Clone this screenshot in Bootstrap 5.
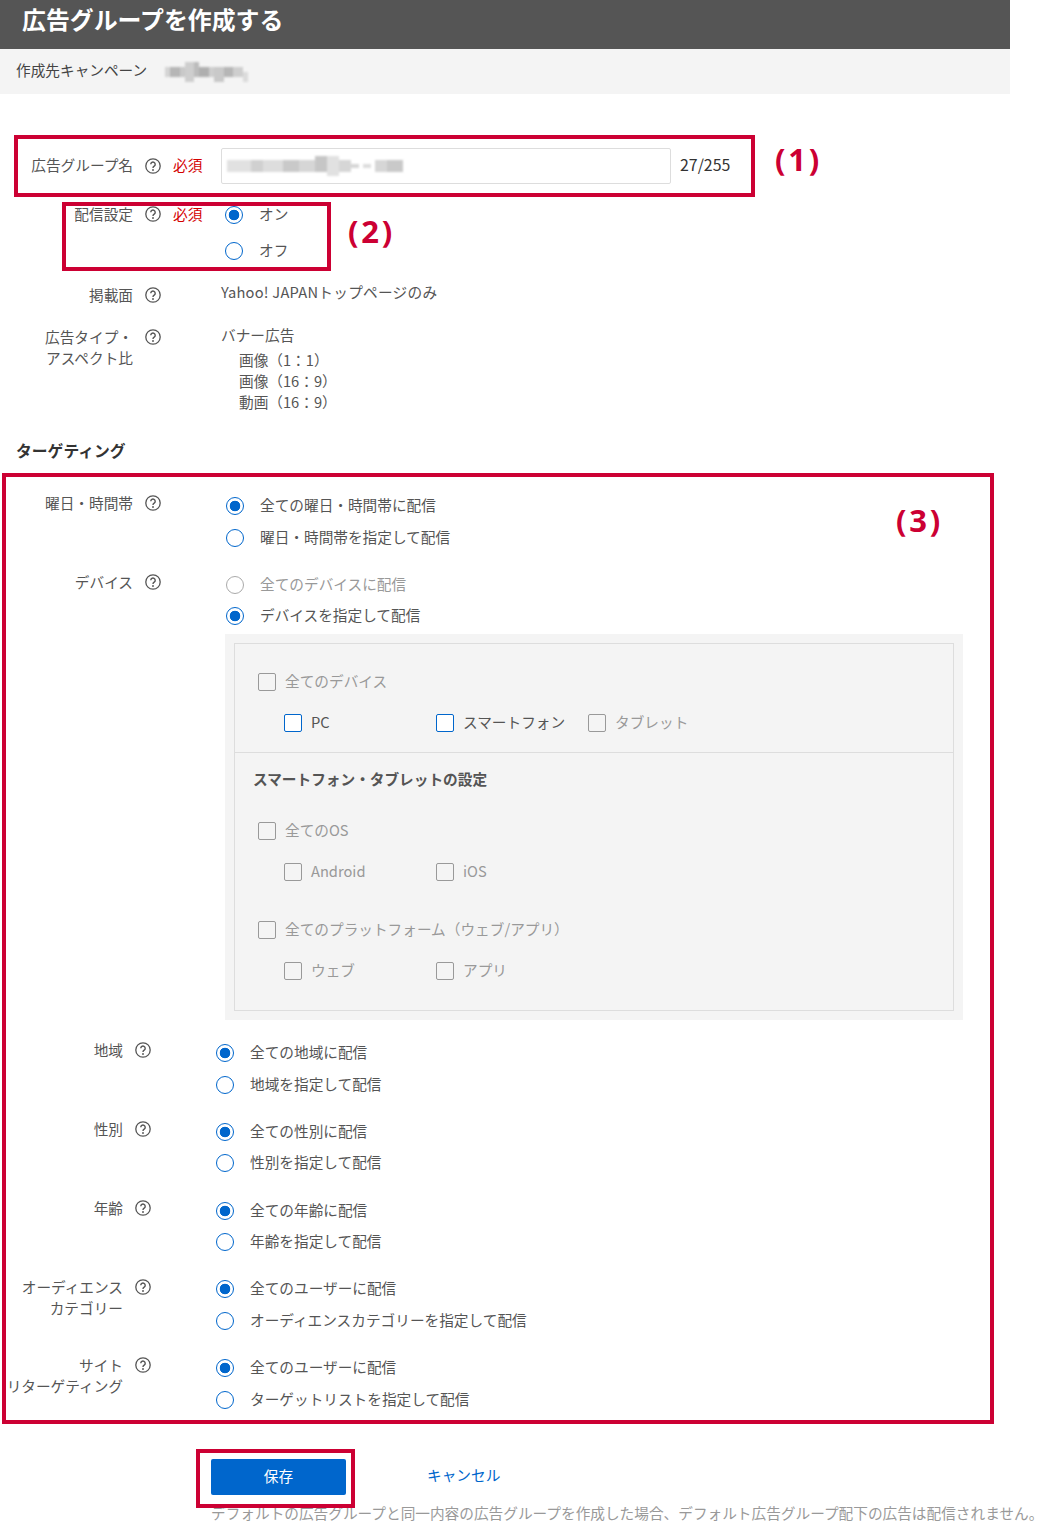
<!DOCTYPE html>
<html lang="ja">
<head>
<meta charset="utf-8">
<title>広告グループを作成する</title>
<link rel="stylesheet" href="https://cdn.jsdelivr.net/npm/bootstrap@5.3.0/dist/css/bootstrap.min.css">
<style>
html,body{margin:0;background:#fff}
body{font-family:"Noto Sans CJK JP","Liberation Sans",sans-serif;font-size:14.67px;line-height:22px;color:#555;position:relative;height:1537px;overflow:hidden}
.sheet{width:1010px}
.top-title{height:49px;background:#555;color:#fff;font-weight:700;font-size:23.9px;line-height:38px;padding-left:22px}
.top-sub{height:45px;background:#f4f4f4;padding-left:16px;color:#444;gap:18px}
.top-sub span{padding-bottom:3px}
.blur-svg{display:block;filter:blur(1px)}
.frow{display:flex}
.lab{flex:none;text-align:right;color:#555}
.lab-a{width:133px}
.lab-b{width:123px}
.q{flex:none;margin-left:12px;width:16px;height:22px;display:flex;align-items:center}
.req{flex:none;margin-left:12px;width:30px;color:#d40000}
.name-row{margin-top:54px;height:36px;align-items:center}
.name-row .lab,.name-row .req,.name-row .count{padding-bottom:2px}
.name-input{margin-left:18px;width:450px;height:36px;border:1px solid #ddd;border-radius:2px;background:#fff;display:flex;align-items:center;padding-left:5px}
.count{margin-left:9px;color:#333;font-size:15.9px}
.opt2{margin-top:13px}
.opt2 .lab,.opt2 .q,.opt2 .req{margin-top:6px}
.opt2-list{margin-left:22px}
.opt2-item{height:36px;display:flex;align-items:center;gap:16px}
.opt2-item span{padding-bottom:2px}
.pub-row{margin-top:12px}
.pub-row .lab,.pub-row .q{margin-top:3px}
.pub-val{margin-left:60px}
.pub-line{letter-spacing:.25px}
.type-row{margin-top:18px}
.type-row .lab{line-height:21px;margin-top:2px}
.type-row .q{margin-top:2px}
.type-sub{padding-left:18px;line-height:21px;margin-top:3px}
.type-sub div{height:21px}
.tg-head{margin-top:28px;font-weight:700;color:#333;padding-left:16px;font-size:15.8px}
.tg-wrap{padding-top:28.25px}
.tg-row{margin-bottom:15.75px}
.tg-row .lab,.tg-row .q{margin-top:2px}
.tg-row .lab{line-height:21px}
.tg-col{margin-left:64px;flex:none}
.tg-opt{height:31.5px;display:flex;align-items:center;gap:16px;padding-left:1px}
.tg-opt span{padding-bottom:2px}
.form-check-input.rd{width:18px;height:18px;margin:0;flex:none;border:1.5px solid #06c;background:#fff;opacity:1}
.form-check-input.rd:checked{background:radial-gradient(circle,#06c 0,#06c 5px,#fff 5.6px);border-color:#06c}
.form-check-input.rd:disabled{border-color:#aaa}
.txt-off{color:#999}
.dev-panel{width:738px;margin-top:2px;background:#f4f4f4;padding:9px;margin-bottom:1.5px}
.dev-box{border:1px solid #ddd;height:368px}
.dev-a{padding:17.5px 0 0 23px;height:108px}
.dev-b{border-top:1px solid #ddd;padding:15px 0 0 18px}
.dev-h{font-weight:700;color:#555;margin-bottom:20.5px}
.cb-row{height:41px;display:flex;align-items:center;gap:9px}
.cb-row span{padding-bottom:3px}
.cb-row.ind{padding-left:26px;gap:0}
.cb-group{margin-left:5px}
.cb-group+.cb-group{margin-top:17px}
.cb-item{width:152px;display:flex;align-items:center;gap:9px;flex:none}
.form-check-input.cb{width:18px;height:18px;margin:0;flex:none;border:1.5px solid #999;border-radius:2px;background:transparent;opacity:1}
.form-check-input.cb.on{border-color:#06c;background:#fff}
.btn-row{margin-left:211px;margin-top:43.5px;height:36px;display:flex;align-items:center}
.btn.save{width:135px;height:36px;background:#06c;border:0;border-radius:2px;color:#fff;font-size:14.67px;padding:0 0 3px;line-height:33px}
.cancel{margin-left:81px;color:#06c;text-decoration:none;padding-bottom:3px}
.note{margin-left:211px;margin-top:7px;color:#999;white-space:nowrap;width:830px;font-size:14.67px}
.rbox{position:absolute;border:4.5px solid #c03;pointer-events:none}
.rb1{left:14px;top:135px;width:741px;height:62px}
.rb2{left:62px;top:202px;width:269px;height:69px}
.rb3{left:2px;top:473px;width:992px;height:951px}
.rb4{left:196px;top:1449px;width:159px;height:59px}
.rnum{position:absolute;color:#c03;font-family:"Open Sans",sans-serif;font-weight:700;font-size:31px;line-height:34px;letter-spacing:2.8px}
.rn1{left:775px;top:142px}
.rn2{left:348px;top:214px}
.rn3{left:896px;top:503px}
</style>
</head>
<body>
<svg width="0" height="0" class="position-absolute">
<symbol id="help" viewBox="0 0 16 16"><circle cx="8" cy="8" r="7.2" fill="none" stroke="#555" stroke-width="1.3"/><path d="M5.8 6.3a2.2 2.2 0 1 1 3.4 1.8c-.8.5-1.2.9-1.2 1.9" fill="none" stroke="#555" stroke-width="1.4"/><circle cx="8" cy="12" r=".95" fill="#555"/></symbol>
</svg>
<div class="sheet">
  <div class="top-title">広告グループを作成する</div>
  <div class="top-sub d-flex align-items-center">
    <span>作成先キャンペーン</span>
    <svg class="blur-svg" width="88" height="20" viewBox="0 0 18 4" preserveAspectRatio="none" shape-rendering="crispEdges" aria-hidden="true">
      <g fill="#777">
        <rect x="0" y="1" width="1" height="2" opacity=".25"/><rect x="1" y="1" width="2" height="2" opacity=".5"/><rect x="3" y="1" width="1" height="2" opacity=".35"/><rect x="4" y="0" width="2" height="4" opacity=".3"/><rect x="6" y="0" width="1" height="3" opacity=".45"/><rect x="7" y="1" width="2" height="2" opacity=".55"/><rect x="9" y="1" width="1" height="2" opacity=".3"/><rect x="10" y="1" width="2" height="3" opacity=".35"/><rect x="12" y="1" width="2" height="2" opacity=".5"/><rect x="14" y="1" width="2" height="2" opacity=".3"/><rect x="16" y="2" width="1" height="2" opacity=".2"/>
      </g>
    </svg>
  </div>

  <div class="frow name-row">
    <div class="lab lab-a">広告グループ名</div>
    <div class="q"><svg width="16" height="16"><use href="#help"/></svg></div>
    <div class="req">必須</div>
    <div class="name-input">
      <svg class="blur-svg" width="176" height="20" viewBox="0 0 44 5" preserveAspectRatio="none" shape-rendering="crispEdges" aria-hidden="true">
        <g fill="#777">
          <rect x="0" y="1" width="6" height="3" opacity=".22"/><rect x="6" y="1" width="3" height="3" opacity=".35"/><rect x="9" y="1" width="5" height="3" opacity=".25"/><rect x="14" y="1" width="4" height="3" opacity=".4"/><rect x="18" y="1" width="4" height="3" opacity=".3"/><rect x="22" y="0" width="3" height="4" opacity=".42"/><rect x="25" y="0" width="3" height="5" opacity=".22"/><rect x="28" y="1" width="3" height="3" opacity=".3"/><rect x="31" y="2" width="2" height="1" opacity=".3"/><rect x="34" y="2" width="2" height="1" opacity=".25"/><rect x="37" y="1" width="3" height="3" opacity=".3"/><rect x="40" y="1" width="4" height="3" opacity=".4"/>
        </g>
      </svg>
    </div>
    <div class="count">27/255</div>
  </div>

  <div class="frow opt2">
    <div class="lab lab-a">配信設定</div>
    <div class="q"><svg width="16" height="16"><use href="#help"/></svg></div>
    <div class="req">必須</div>
    <div class="opt2-list">
      <div class="opt2-item"><input class="form-check-input rd" type="radio" name="r0" checked><span>オン</span></div>
      <div class="opt2-item"><input class="form-check-input rd" type="radio" name="r0"><span>オフ</span></div>
    </div>
  </div>

  <div class="frow pub-row">
    <div class="lab lab-a">掲載面</div>
    <div class="q"><svg width="16" height="16"><use href="#help"/></svg></div>
    <div class="pub-val pub-line">Yahoo! JAPANトップページのみ</div>
  </div>

  <div class="frow type-row">
    <div class="lab lab-a">広告タイプ・<br>アスペクト比</div>
    <div class="q"><svg width="16" height="16"><use href="#help"/></svg></div>
    <div class="pub-val">
      <div>バナー広告</div>
      <div class="type-sub"><div>画像（1：1）</div><div>画像（16：9）</div><div>動画（16：9）</div></div>
    </div>
  </div>

  <div class="tg-head">ターゲティング</div>
  <div class="tg-wrap">
    <div class="frow tg-row">
      <div class="lab lab-a">曜日・時間帯</div>
      <div class="q"><svg width="16" height="16"><use href="#help"/></svg></div>
      <div class="tg-col">
        <div class="tg-opt"><input class="form-check-input rd" type="radio" name="r1" checked><span>全ての曜日・時間帯に配信</span></div>
        <div class="tg-opt"><input class="form-check-input rd" type="radio" name="r1"><span>曜日・時間帯を指定して配信</span></div>
      </div>
    </div>
    <div class="frow tg-row">
      <div class="lab lab-a">デバイス</div>
      <div class="q"><svg width="16" height="16"><use href="#help"/></svg></div>
      <div class="tg-col">
        <div class="tg-opt"><input class="form-check-input rd" type="radio" name="r2" disabled><span class="txt-off">全てのデバイスに配信</span></div>
        <div class="tg-opt"><input class="form-check-input rd" type="radio" name="r2" checked><span>デバイスを指定して配信</span></div>
        <div class="dev-panel">
          <div class="dev-box">
            <div class="dev-a">
              <div class="cb-row txt-off"><input class="form-check-input cb" type="checkbox"><span>全てのデバイス</span></div>
              <div class="cb-row ind">
                <div class="cb-item"><input class="form-check-input cb on" type="checkbox"><span>PC</span></div>
                <div class="cb-item"><input class="form-check-input cb on" type="checkbox"><span>スマートフォン</span></div>
                <div class="cb-item txt-off"><input class="form-check-input cb" type="checkbox"><span>タブレット</span></div>
              </div>
            </div>
            <div class="dev-b">
              <div class="dev-h">スマートフォン・タブレットの設定</div>
              <div class="cb-group txt-off">
                <div class="cb-row"><input class="form-check-input cb" type="checkbox"><span>全てのOS</span></div>
                <div class="cb-row ind">
                  <div class="cb-item"><input class="form-check-input cb" type="checkbox"><span>Android</span></div>
                  <div class="cb-item"><input class="form-check-input cb" type="checkbox"><span>iOS</span></div>
                </div>
              </div>
              <div class="cb-group txt-off">
                <div class="cb-row"><input class="form-check-input cb" type="checkbox"><span>全てのプラットフォーム（ウェブ/アプリ）</span></div>
                <div class="cb-row ind">
                  <div class="cb-item"><input class="form-check-input cb" type="checkbox"><span>ウェブ</span></div>
                  <div class="cb-item"><input class="form-check-input cb" type="checkbox"><span>アプリ</span></div>
                </div>
              </div>
            </div>
          </div>
        </div>
      </div>
    </div>
    <div class="frow tg-row">
      <div class="lab lab-b">地域</div>
      <div class="q"><svg width="16" height="16"><use href="#help"/></svg></div>
      <div class="tg-col">
        <div class="tg-opt"><input class="form-check-input rd" type="radio" name="r3" checked><span>全ての地域に配信</span></div>
        <div class="tg-opt"><input class="form-check-input rd" type="radio" name="r3"><span>地域を指定して配信</span></div>
      </div>
    </div>
    <div class="frow tg-row">
      <div class="lab lab-b">性別</div>
      <div class="q"><svg width="16" height="16"><use href="#help"/></svg></div>
      <div class="tg-col">
        <div class="tg-opt"><input class="form-check-input rd" type="radio" name="r4" checked><span>全ての性別に配信</span></div>
        <div class="tg-opt"><input class="form-check-input rd" type="radio" name="r4"><span>性別を指定して配信</span></div>
      </div>
    </div>
    <div class="frow tg-row">
      <div class="lab lab-b">年齢</div>
      <div class="q"><svg width="16" height="16"><use href="#help"/></svg></div>
      <div class="tg-col">
        <div class="tg-opt"><input class="form-check-input rd" type="radio" name="r5" checked><span>全ての年齢に配信</span></div>
        <div class="tg-opt"><input class="form-check-input rd" type="radio" name="r5"><span>年齢を指定して配信</span></div>
      </div>
    </div>
    <div class="frow tg-row">
      <div class="lab lab-b">オーディエンス<br>カテゴリー</div>
      <div class="q"><svg width="16" height="16"><use href="#help"/></svg></div>
      <div class="tg-col">
        <div class="tg-opt"><input class="form-check-input rd" type="radio" name="r6" checked><span>全てのユーザーに配信</span></div>
        <div class="tg-opt"><input class="form-check-input rd" type="radio" name="r6"><span>オーディエンスカテゴリーを指定して配信</span></div>
      </div>
    </div>
    <div class="frow tg-row">
      <div class="lab lab-b text-nowrap">サイト<br>リターゲティング</div>
      <div class="q"><svg width="16" height="16"><use href="#help"/></svg></div>
      <div class="tg-col">
        <div class="tg-opt"><input class="form-check-input rd" type="radio" name="r7" checked><span>全てのユーザーに配信</span></div>
        <div class="tg-opt"><input class="form-check-input rd" type="radio" name="r7"><span>ターゲットリストを指定して配信</span></div>
      </div>
    </div>
  </div>

  <div class="btn-row">
    <button type="button" class="btn btn-primary save">保存</button>
    <a class="cancel" href="#">キャンセル</a>
  </div>
  <div class="note">デフォルトの広告グループと同一内容の広告グループを作成した場合、デフォルト広告グループ配下の広告は配信されません。</div>
</div>

<div class="rbox rb1"></div>
<div class="rbox rb2"></div>
<div class="rbox rb3"></div>
<div class="rbox rb4"></div>
<div class="rnum rn1">(1)</div>
<div class="rnum rn2">(2)</div>
<div class="rnum rn3">(3)</div>
<script src="https://cdn.jsdelivr.net/npm/bootstrap@5.3.0/dist/js/bootstrap.bundle.min.js"></script>
</body>
</html>
